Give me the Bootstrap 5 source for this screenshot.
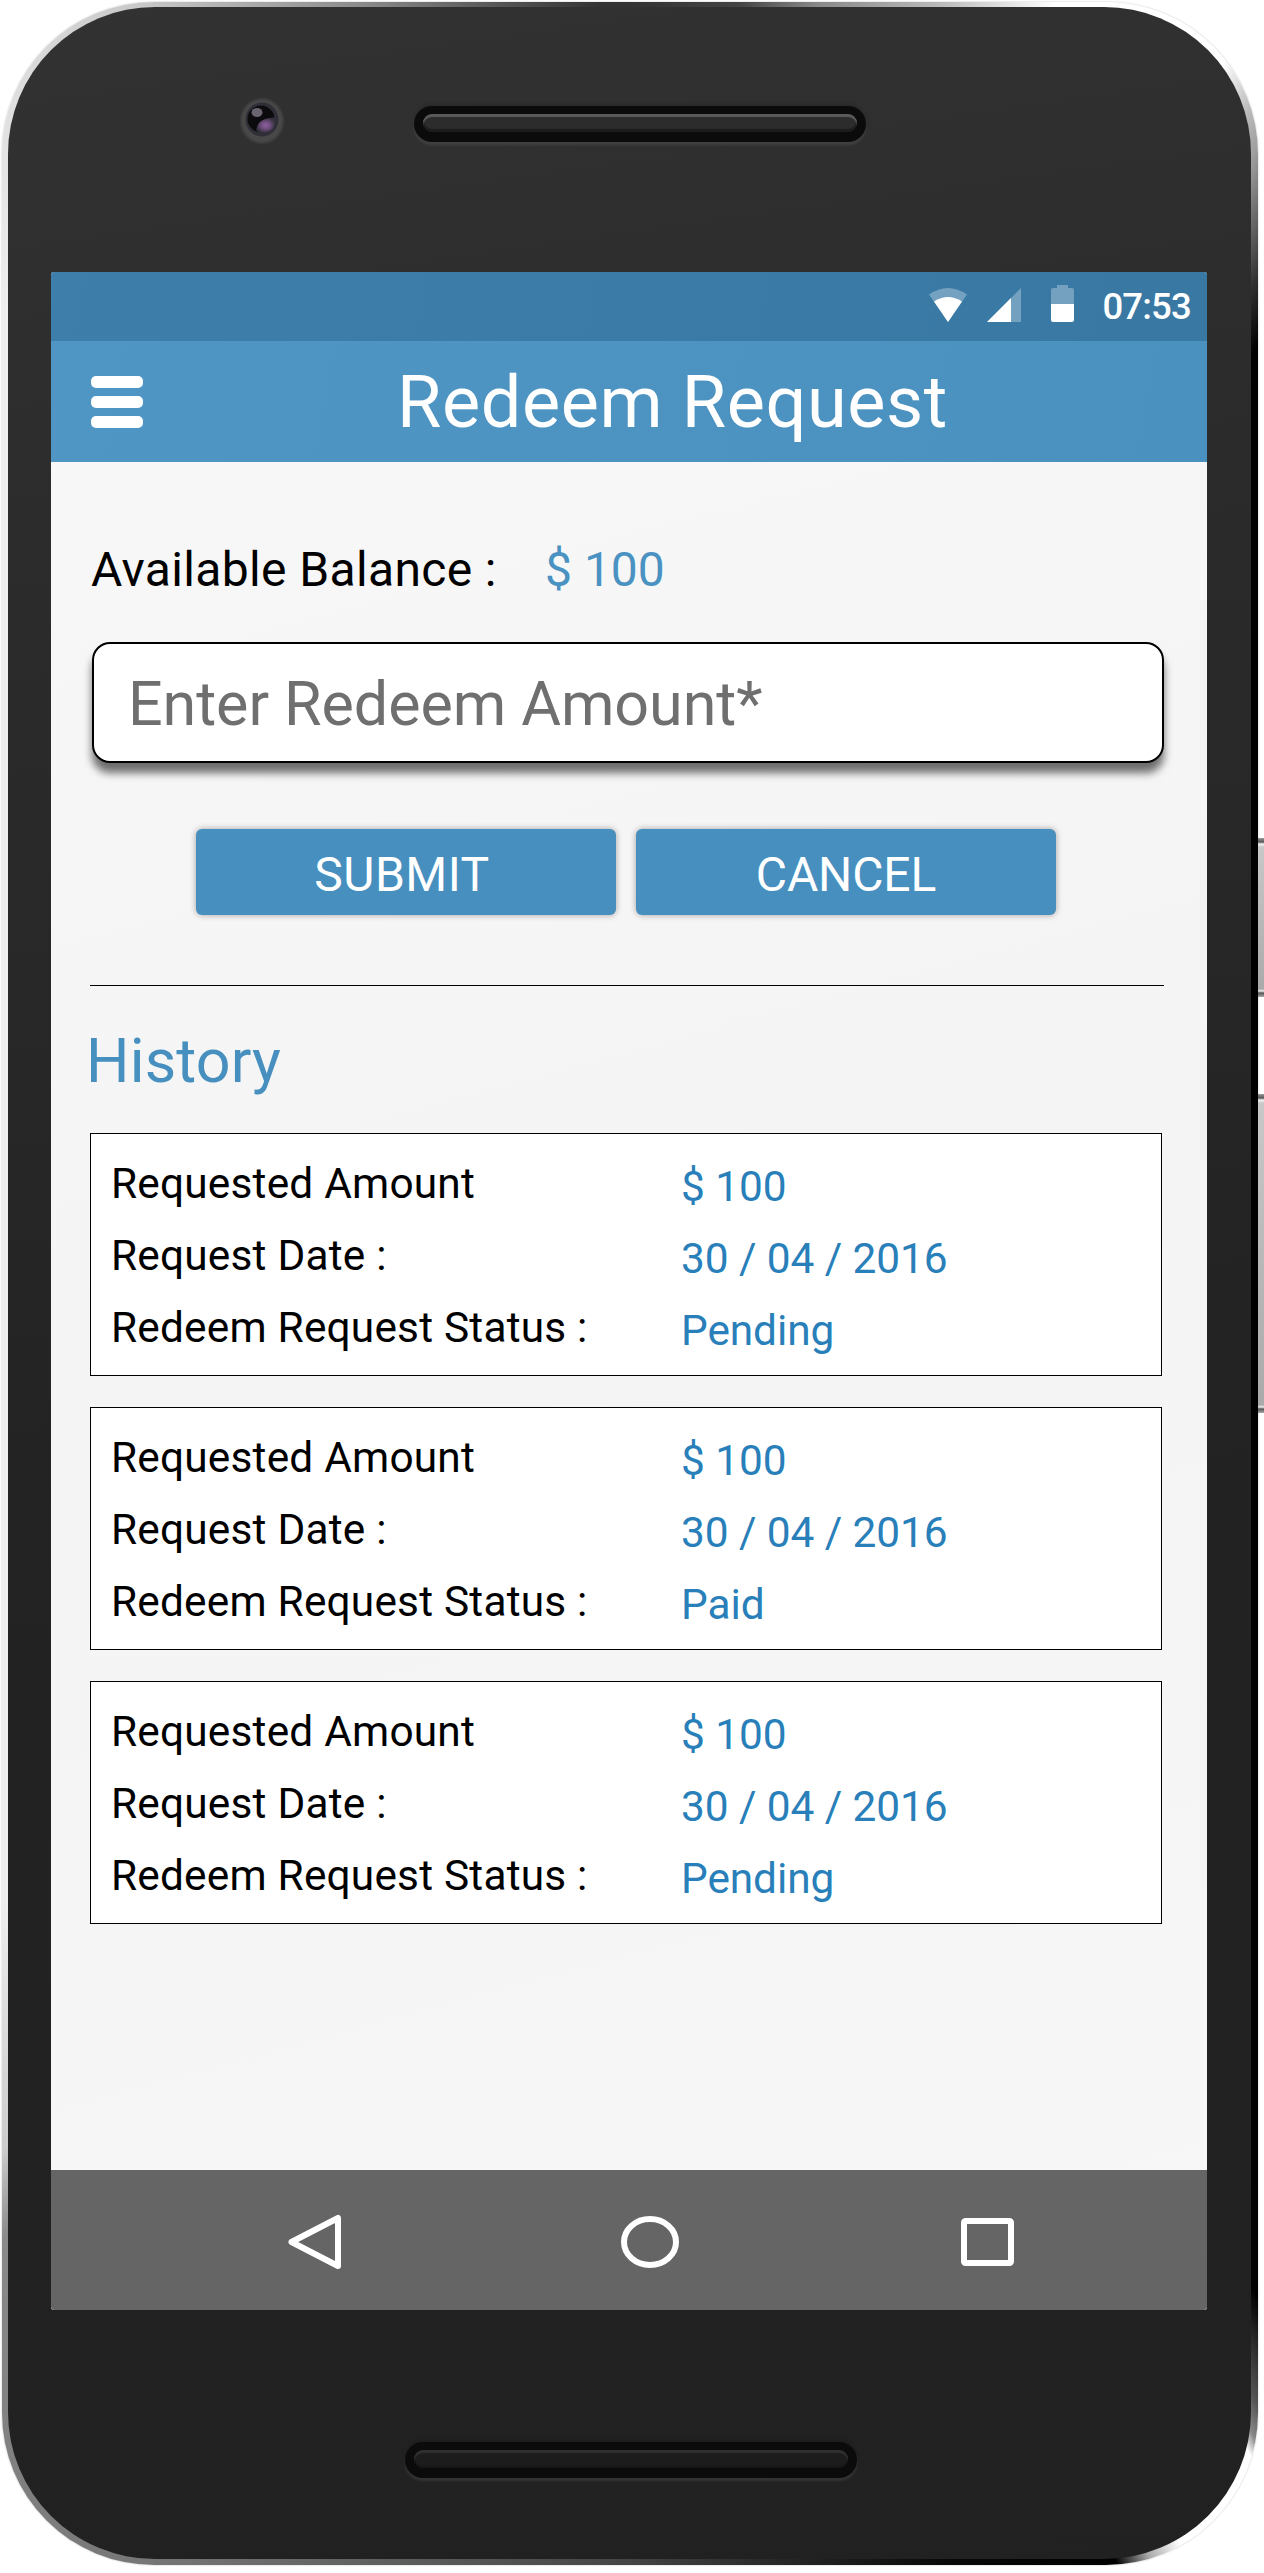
<!DOCTYPE html>
<html lang="en">
<head>
<meta charset="utf-8">
<meta name="viewport" content="width=device-width, initial-scale=1">
<title>Redeem Request</title>
<link href="https://cdn.jsdelivr.net/npm/bootstrap@5.3.0/dist/css/bootstrap.min.css" rel="stylesheet">
<style>
  body { font-family: Roboto, "Liberation Sans", sans-serif; background: #fff; color: #000; }
  .stage { width: 1264px; height: 2573px; padding: 2px 0 0 2px; }
  .phone-frame {
    width: 1256px; height: 2563px; padding: 5px 7px 6px 6px; border-radius: 152px;
    box-shadow: 0 0 2px rgba(0,0,0,.28);
    background: conic-gradient(#333 0deg, #444 4.9deg, #888 8.3deg, #bbb 13.7deg, #fff 18.4deg, #fff 25.9deg, #bbb 27.8deg, #999 29.1deg, #777 30deg, #333 31.9deg, #000 33.8deg, #000 148.2deg, #555 150.8deg, #888 151.6deg, #fff 152.1deg, #fff 156.4deg, #aaa 157.8deg, #000 159.2deg, #080808 166deg, #444 180deg, #777 200.9deg, #828282 208.8deg, #8a8a8a 213.2deg, #ccc 215.8deg, #eee 225deg, #eee 327.5deg, #ddd 333deg, #c8c8c8 339.1deg, #888 348.5deg, #555 354.2deg, #333 358.7deg);
  }
  .phone-body { border-radius: 147px; background: linear-gradient(172deg, #323232 0, #2e2e2e 12%, #282828 35%, #232323 55%, #212121 100%); padding: 0 43px; }
  .top-bezel { height: 265px; padding-left: 188px; padding-top: 90px; gap: 129px; }
  .speaker { width: 452px; height: 36px; border-radius: 18px; background: #0b0b0b; padding: 8px 9px 10px; box-shadow: 0 3px 3px rgba(255,255,255,.09), 0 -2px 3px rgba(0,0,0,.15); }
  .speaker-slot { height: 18px; border-radius: 9px; background: #2c2c2c; box-shadow: inset 0 3px 1px #5a5a5a, inset 0 -3px 1px #1c1c1c; }
  .speaker-low .speaker-slot { background: #1c1c1c; box-shadow: inset 0 3px 1px #303030, inset 0 -2px 1px #171717; }
  .top-bezel .speaker { margin-top: 9px; }
  .bottom-bezel { height: 249px; padding: 132px 0 0 354px; }
  .screen { width: 1156px; height: 2038px; border-radius: 3px; background: linear-gradient(165deg, #f8f8f8, #f4f4f4 50%, #f7f7f7); }
  .status-bar { height: 69px; background: linear-gradient(100deg, #3e7eab, #3878a3); padding-right: 16px; }
  .clock { font-size: 36.5px; font-weight: 500; line-height: 69px; letter-spacing: -.8px; }
  .app-bar { height: 121px; background: linear-gradient(100deg, #4f96c5, #4a91bf); padding: 0 0 0 40px; }
  .menu-btn { width: 52px; gap: 8px; }
  .menu-btn span { height: 12px; border-radius: 5px; background: #fff; }
  .app-title { font-size: 72px; line-height: 123px; letter-spacing: .6px; margin-left: 254px; height: 121px; white-space: nowrap; font-weight: 400; }
  .main-pane { height: 1708px; padding: 78px 43px 0 39px; }
  .balance { font-size: 48px; line-height: 60px; padding-left: 1px; white-space: nowrap; }
  .balance-label { width: 454px; letter-spacing: .36px; }
  .sky { color: #4a92c2; }
  .amount-input.form-control { width: 1072px; height: 121px; margin: 42px 0 0 2px; border: 2px solid #000; border-radius: 18px; padding: 2px 34px 0; font-size: 61px; letter-spacing: -.07px; background: #fff; box-shadow: 0 10px 8px rgba(0,0,0,.56); }
  .amount-input::placeholder { color: #6f6f6f; opacity: 1; }
  .action-row { margin: 66px 0 0 106px; gap: 20px; }
  .action-row .btn { width: 420px; height: 86px; border: 0; border-radius: 6px; background: #468fbf; color: #fff; font-size: 48px; line-height: 81px; padding: 5px 0 0; letter-spacing: -.15px; box-shadow: 0 0 6px rgba(0,0,0,.35); }
  .action-row .btn:first-child { padding-right: 8px; letter-spacing: .5px; }
  .divider { height: 1px; background: #000; margin-top: 70px; }
  .history-title { font-size: 61px; line-height: 70px; margin: 40px 0 37px -4px; font-weight: 400; color: #468fbf; letter-spacing: .15px; }
  .history-card.card { width: 1072px; height: 243px; border: 1px solid #000; border-radius: 0; background: #fff; padding: 14px 0 0 20px; color: #000; font-size: 42.4px; }
  .history-list { gap: 31px; }
  .history-line { height: 72px; line-height: 72px; white-space: nowrap; }
  .history-key { width: 570px; letter-spacing: .2px; }
  .history-val { color: #287fb9; padding-top: 3px; letter-spacing: -.08px; }
  .nav-keys { height: 140px; background: #656565; padding: 3px 0 0 237px; border-radius: 0 0 3px 3px; }
  .side-key { left: 1258px; width: 6px; background: linear-gradient(#999 0, #555 4px, #f4f4f4 6px, #c8c8c8 9px, #aaa calc(100% - 8px), #eee calc(100% - 6px), #555 calc(100% - 4px), #aaa 100%); }
  .key-power { top: 838px; height: 159px; }
  .key-volume { top: 1094px; height: 319px; }
  .status-icons { margin: 12px 27px 0 0; }
  .key-home { margin-left: 279px; }
  .key-recent { margin-left: 282px; }
</style>
</head>
<body>
<div class="stage position-relative overflow-hidden">
  <div class="phone-frame d-flex">
    <div class="phone-body flex-grow-1 d-flex flex-column">
      <div class="top-bezel d-flex align-items-start">
        <svg width="46" height="48" viewBox="0 0 46 48">
          <defs>
            <radialGradient id="ring"><stop offset=".65" stop-color="#4a4a4a"/><stop offset=".85" stop-color="#474747"/><stop offset="1" stop-color="#303030"/></radialGradient>
            <radialGradient id="iris"><stop offset="0" stop-color="#8d5fa0"/><stop offset=".5" stop-color="#6d4d7c"/><stop offset="1" stop-color="#34323c"/></radialGradient>
          </defs>
          <ellipse cx="23" cy="24" rx="23" ry="24" fill="url(#ring)"/>
          <ellipse cx="23" cy="22.5" rx="16.5" ry="17" fill="#302f38"/>
          <circle cx="22" cy="22" r="13.5" fill="#0b0b0d"/>
          <path d="M36 20.5 Q38 35 23 36 Q15 35 18 30 Q20 21 36 20.5Z" fill="url(#iris)"/>
          <ellipse cx="18" cy="15.500" rx="5.500" ry="4.500" fill="#6a6470"/>
        </svg>
        <div class="speaker"><div class="speaker-slot"></div></div>
      </div>

      <div class="screen d-flex flex-column overflow-hidden">
        <div class="status-bar d-flex align-items-start justify-content-end text-white">
          <svg class="status-icons" width="146" height="40" viewBox="929 284 146 40">
            <path d="M929 294.500 Q948 281.500 967 294.500 L948 322Z" fill="#fff" fill-opacity=".3"/>
            <path d="M934 301.500 Q948 292.500 962 301.500 L948 322Z" fill="#fff"/>
            <path d="M1021 288 V322 H987Z" fill="#fff" fill-opacity=".3"/>
            <path d="M1011 298 V322 H987Z" fill="#fff"/>
            <path d="M1051 304 V290 Q1051 288 1053 288 H1057 V285 H1068 V288 H1072 Q1074 288 1074 290 V304Z" fill="#fff" fill-opacity=".3"/>
            <path d="M1051 304 H1074 V320 Q1074 322 1072 322 H1053 Q1051 322 1051 320Z" fill="#fff"/>
          </svg>
          <span class="clock">07:53</span>
        </div>
        <header class="app-bar d-flex align-items-center text-white">
          <div class="menu-btn d-flex flex-column"><span></span><span></span><span></span></div>
          <h1 class="app-title mb-0">Redeem Request</h1>
        </header>

        <main class="main-pane">
          <div class="balance d-flex"><span class="balance-label">Available Balance :</span><span class="sky">$ 100</span></div>
          <input class="form-control amount-input" type="text" placeholder="Enter Redeem Amount*">
          <div class="action-row d-flex">
            <button class="btn" type="button">SUBMIT</button>
            <button class="btn" type="button">CANCEL</button>
          </div>
          <div class="divider"></div>
          <h2 class="history-title">History</h2>
          <div class="history-list d-flex flex-column">
            <div class="card history-card">
              <div class="history-line d-flex"><span class="history-key">Requested Amount</span><span class="history-val">$ 100</span></div>
              <div class="history-line d-flex"><span class="history-key">Request Date :</span><span class="history-val">30 / 04 / 2016</span></div>
              <div class="history-line d-flex"><span class="history-key">Redeem Request Status :</span><span class="history-val">Pending</span></div>
            </div>
            <div class="card history-card">
              <div class="history-line d-flex"><span class="history-key">Requested Amount</span><span class="history-val">$ 100</span></div>
              <div class="history-line d-flex"><span class="history-key">Request Date :</span><span class="history-val">30 / 04 / 2016</span></div>
              <div class="history-line d-flex"><span class="history-key">Redeem Request Status :</span><span class="history-val">Paid</span></div>
            </div>
            <div class="card history-card">
              <div class="history-line d-flex"><span class="history-key">Requested Amount</span><span class="history-val">$ 100</span></div>
              <div class="history-line d-flex"><span class="history-key">Request Date :</span><span class="history-val">30 / 04 / 2016</span></div>
              <div class="history-line d-flex"><span class="history-key">Redeem Request Status :</span><span class="history-val">Pending</span></div>
            </div>
          </div>
        </main>

        <nav class="nav-keys d-flex align-items-center">
          <svg width="54" height="56" viewBox="0 0 54 56" fill="none" stroke="#fff" stroke-width="6" stroke-linejoin="round"><path d="M3.500 28 L50 4 V52Z"/></svg>
          <svg class="key-home" width="58" height="52" viewBox="0 0 58 52" fill="none" stroke="#fff" stroke-width="6"><ellipse cx="29" cy="26" rx="26" ry="23"/></svg>
          <svg class="key-recent" width="53" height="48" viewBox="0 0 53 48" fill="none" stroke="#fff" stroke-width="6"><rect x="3" y="3" width="47" height="42" rx="1.500"/></svg>
        </nav>
      </div>

      <div class="bottom-bezel"><div class="speaker speaker-low"><div class="speaker-slot"></div></div></div>
    </div>
  </div>
  <div class="side-key key-power position-absolute"></div>
  <div class="side-key key-volume position-absolute"></div>
</div>
<script src="https://cdn.jsdelivr.net/npm/bootstrap@5.3.0/dist/js/bootstrap.bundle.min.js"></script>
</body>
</html>
